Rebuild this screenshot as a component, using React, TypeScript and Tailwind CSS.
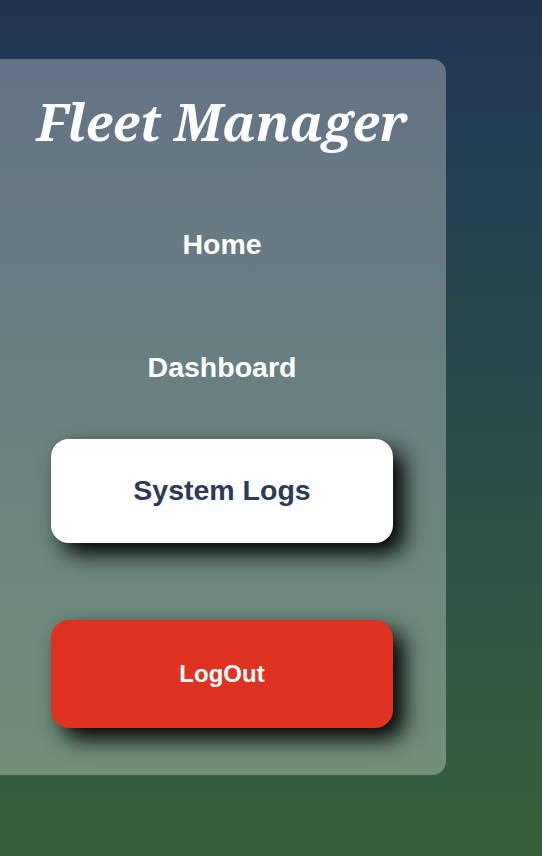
import { useState } from 'react';

const links = ['Home', 'Dashboard', 'System Logs'];

export default function App() {
  const [active, setActive] = useState('System Logs');

  return (
    <div className="min-h-screen w-full bg-gradient-to-b from-[#203554] to-[#36623a] pt-[59px] overflow-hidden">
      <aside className="-ml-[2px] w-[448px] h-[716px] rounded-r-[14px] bg-white/30 flex flex-col items-center">
        <h1
          className="mt-[38px] text-[50.5px] leading-none font-bold italic text-white"
          style={{ fontFamily: '"Noto Serif", "DejaVu Serif", serif' }}
        >
          Fleet Manager
        </h1>

        <nav className="mt-[45px] flex flex-col gap-[19px]">
          {links.map((label) => {
            const isActive = label === active;
            return (
              <button
                key={label}
                onClick={() => setActive(label)}
                className={
                  isActive
                    ? 'w-[342px] h-[104px] rounded-[18px] bg-white text-[#2d3b56] text-[28.5px] font-bold shadow-[11px_11px_22px_#000]'
                    : 'w-[342px] h-[104px] rounded-[18px] bg-transparent text-white text-[28.5px] font-bold'
                }
                style={{ fontFamily: '"Liberation Sans", Arial, sans-serif' }}
              >
                {label}
              </button>
            );
          })}
        </nav>

        <button
          className="mt-[77px] w-[342px] h-[108px] rounded-[18px] bg-[#df3220] text-white text-2xl font-bold shadow-[11px_11px_22px_#000]"
          style={{ fontFamily: '"Liberation Sans", Arial, sans-serif' }}
        >
          LogOut
        </button>
      </aside>
    </div>
  );
}
